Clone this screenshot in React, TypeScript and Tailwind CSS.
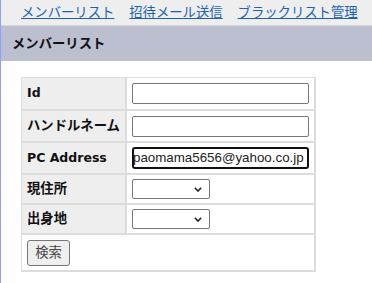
const jp = "font-['DejaVu_Sans','Noto_Sans_CJK_JP',sans-serif]"

function Select() {
  return (
    <div className="relative h-[20px] w-[78px] rounded-[2px] border border-[#767676] bg-white">
      <svg width="8" height="5" viewBox="0 0 8 5" className="absolute right-[7px] top-[7px]">
        <path d="M0.8 0.8 L4 4 L7.2 0.8" fill="none" stroke="#222" strokeWidth="1.6" />
      </svg>
    </div>
  )
}

export default function App() {
  return (
    <div className={`min-h-screen border-l border-[#8f9ffb] bg-white text-[13.33px] text-[#111] ${jp}`}>
      <nav className="flex h-[26px] items-center gap-[15px] border-b border-[#d6d6d6] bg-[#eeeeee] pl-[20px] leading-none">
        <a href="#" className="text-[#1b62b6] underline">メンバーリスト</a>
        <a href="#" className="text-[#1b62b6] underline">招待メール送信</a>
        <a href="#" className="text-[#1b62b6] underline">ブラックリスト管理</a>
      </nav>

      <div className="flex h-[35px] items-center bg-[#bcbfcf] pl-[11px] font-bold leading-none">
        メンバーリスト
      </div>

      <div className="pl-[20px] pt-[16px]">
        <div className="grid w-[295px] grid-cols-[103px_187px] gap-[2px] bg-[#dcdcdc] pb-[2px] pl-[1px] pr-[2px] pt-[1px]">
          <div className="flex h-[31px] items-center bg-[#eeeeee] pl-[5px] text-[12.5px] font-bold">Id</div>
          <div className="flex items-center bg-white pl-[5px]">
            <input className="h-[21px] w-[177px] rounded-[2px] border border-[#767676] px-[2px]" />
          </div>

          <div className="flex h-[30px] items-center bg-[#eeeeee] pl-[5px] font-bold">ハンドルネーム</div>
          <div className="flex items-center bg-white pl-[5px]">
            <input className="h-[21px] w-[177px] rounded-[2px] border border-[#767676] px-[2px]" />
          </div>

          <div className="flex h-[30px] items-center bg-[#eeeeee] pl-[5px] text-[12.5px] font-bold">PC Address</div>
          <div className="flex items-center bg-white pl-[5px]">
            <div className="flex h-[22px] w-[177px] items-center overflow-hidden rounded-[3px] border-2 border-[#111] bg-white">
              <span className="-ml-[1px] whitespace-nowrap font-['Liberation_Sans',sans-serif] text-[13.33px] leading-none text-[#222]">
                paomama5656@yahoo.co.jp
              </span>
            </div>
          </div>

          <div className="flex h-[28px] items-center bg-[#eeeeee] pl-[5px] font-bold">現住所</div>
          <div className="flex items-center bg-white pl-[5px]">
            <Select />
          </div>

          <div className="flex h-[28px] items-center bg-[#eeeeee] pl-[5px] font-bold">出身地</div>
          <div className="flex items-center bg-white pl-[5px]">
            <Select />
          </div>

          <div className="col-span-2 flex h-[35px] items-center bg-white pl-[5px]">
            <button className="h-[26px] w-[43px] rounded-[3px] border border-[#767676] bg-[#efefef] leading-none text-[#444]">
              検索
            </button>
          </div>
        </div>
      </div>
    </div>
  )
}
